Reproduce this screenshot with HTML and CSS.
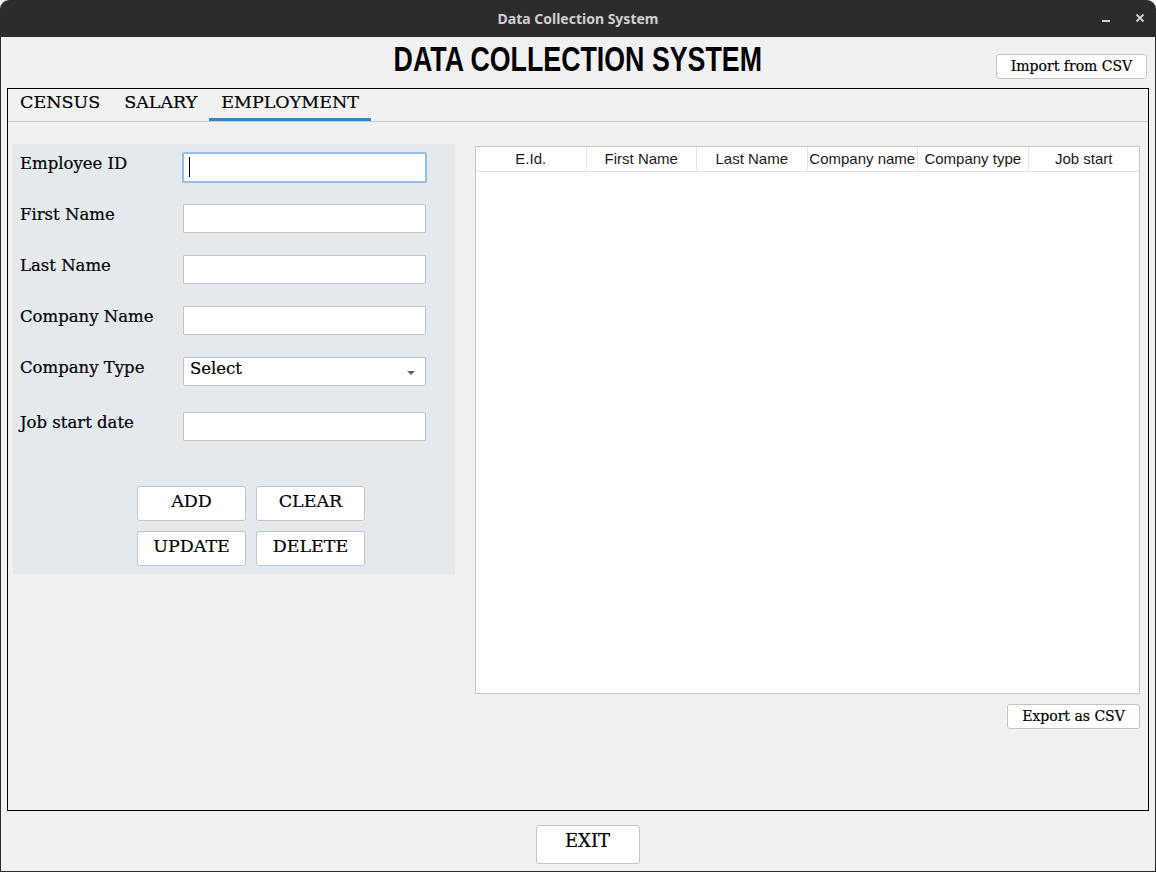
FILE: index.html
```html
<!DOCTYPE html>
<html>
<head>
<meta charset="utf-8">
<title>Data Collection System</title>
<link rel="stylesheet" href="styles.css">
</head>
<body>
<div class="window">
  <div class="titlebar">
    <span class="titlebar-text">Data Collection System</span>
    <div class="controls">
      <svg class="ctl" width="12" height="12" viewBox="0 0 12 12"><rect x="2" y="8" width="8" height="2" fill="#d0d0d0"/></svg>
      <svg class="ctl" width="12" height="12" viewBox="0 0 12 12"><path d="M2.5 2.5 L9.5 9.5 M9.5 2.5 L2.5 9.5" stroke="#d0d0d0" stroke-width="1.8"/></svg>
    </div>
  </div>
  <div class="app">
    <div class="header">
      <div></div>
      <h1 class="app-title"><span class="app-title-text">DATA COLLECTION SYSTEM</span></h1>
      <div class="header-right"><button class="btn btn-small btn-import">Import from CSV</button></div>
    </div>
    <div class="tabpanel">
      <div class="tabbar">
        <div class="tab">CENSUS</div>
        <div class="tab">SALARY</div>
        <div class="tab active">EMPLOYMENT</div>
      </div>
      <div class="tab-content">
        <div class="form">
          <div class="row">
            <span class="label">Employee ID</span>
            <div class="field focused"><span class="caret"></span></div>
          </div>
          <div class="row">
            <span class="label">First Name</span>
            <div class="field"></div>
          </div>
          <div class="row">
            <span class="label">Last Name</span>
            <div class="field"></div>
          </div>
          <div class="row">
            <span class="label">Company Name</span>
            <div class="field"></div>
          </div>
          <div class="row row-select">
            <span class="label">Company Type</span>
            <div class="field select"><span class="select-text">Select</span><span class="arrow"></span></div>
          </div>
          <div class="row row-last">
            <span class="label">Job start date</span>
            <div class="field"></div>
          </div>
          <div class="buttons">
            <button class="btn btn-form">ADD</button>
            <button class="btn btn-form">CLEAR</button>
            <button class="btn btn-form">UPDATE</button>
            <button class="btn btn-form">DELETE</button>
          </div>
        </div>
        <div class="right">
          <div class="table">
            <div class="thead">
              <div class="th">E.Id.</div>
              <div class="th">First Name</div>
              <div class="th">Last Name</div>
              <div class="th">Company name</div>
              <div class="th">Company type</div>
              <div class="th">Job start</div>
            </div>
          </div>
          <div class="export-row"><button class="btn btn-small btn-export">Export as CSV</button></div>
        </div>
      </div>
    </div>
    <div class="footer">
      <button class="btn btn-exit">EXIT</button>
    </div>
  </div>
</div>
</body>
</html>
```

FILE: styles.css
```css
* { box-sizing: border-box; }
html, body { margin: 0; padding: 0; background: #ffffff; }
body { width: 1156px; height: 872px; overflow: hidden; }

.window { width: 1156px; height: 872px; display: flex; flex-direction: column; }

.titlebar {
  height: 37px;
  background: #2c2c2c;
  border-radius: 9px 9px 0 0;
  position: relative;
  display: flex;
  align-items: center;
  justify-content: center;
}
.titlebar-text {
  font-family: "Noto Sans", "DejaVu Sans", sans-serif;
  font-weight: bold;
  font-size: 14px;
  color: #cfcfcf;
}
.controls {
  position: absolute;
  right: 10px;
  top: 12px;
  display: flex;
  gap: 22px;
}
.ctl { display: block; }

.app {
  flex: 1;
  background: #f1f1f1;
  border-left: 1px solid #2c2c2c;
  border-right: 1px solid #2c2c2c;
  border-bottom: 1px solid #2c2c2c;
  display: flex;
  flex-direction: column;
}

.header {
  height: 51px;
  display: grid;
  grid-template-columns: 1fr 380px 1fr;
  align-items: start;
}
.app-title {
  margin: 0;
  padding-top: 3px;
  display: flex;
  justify-content: center;
  font-family: "Liberation Sans", Arial, sans-serif;
  font-weight: bold;
  font-size: 35px;
  line-height: 38px;
  color: #000;
  white-space: nowrap;
}
.app-title-text {
  display: inline-block;
  transform: scaleX(0.765);
  transform-origin: center;
}
.header-right {
  display: flex;
  justify-content: flex-end;
  padding-top: 17px;
  padding-right: 8px;
}

.btn {
  background: #ffffff;
  border: 1px solid #c4c4c4;
  border-radius: 3px;
  font-family: "DejaVu Serif", "Liberation Serif", serif;
  color: #000;
  padding: 0;
  cursor: default;
  -webkit-text-stroke: 0.2px #000;
}
.btn-small {
  height: 25px;
  font-size: 14px;
  line-height: 22px;
  padding-bottom: 2px;
}
.btn-import { width: 151px; }

.tabpanel {
  margin: 0 6px;
  height: 723px;
  border: 1px solid #000;
  display: flex;
  flex-direction: column;
}
.tabbar {
  display: flex;
  height: 33px;
  border-bottom: 1px solid #c9c9c9;
}
.tab {
  padding: 0 12px;
  font-family: "DejaVu Serif", "Liberation Serif", serif;
  font-size: 17.5px;
  line-height: 26px;
  height: 32px;
  color: #000;
  -webkit-text-stroke: 0.2px #000;
}
.tab.active { border-bottom: 3px solid #3f80c4; }

.tab-content {
  display: flex;
  flex: 1;
  padding: 22px 8px 0 5px;
}

.form {
  width: 442px;
  height: 430px;
  background: #e4e9ed;
  padding: 9px 0 0 7px;
}
.row {
  display: flex;
  align-items: flex-start;
  height: 51px;
}
.row-select { height: 55px; }
.row-last { height: 74px; }
.label {
  width: 163px;
  font-family: "DejaVu Serif", "Liberation Serif", serif;
  font-size: 16.5px;
  line-height: 22px;
  color: #000;
  -webkit-text-stroke: 0.2px #000;
}
.field {
  width: 243px;
  height: 29px;
  background: #fff;
  border: 1px solid #c3c3c3;
  border-radius: 1px;
  position: relative;
}
.field.focused {
  border: 2px solid #95bde6;
  width: 245px;
  height: 31px;
  margin-left: -1px;
  margin-top: -1px;
  border-radius: 2px;
}
.caret {
  position: absolute;
  left: 5px;
  top: 3px;
  width: 1px;
  height: 20px;
  background: #000;
}
.select {
  display: flex;
  align-items: center;
  justify-content: space-between;
  padding: 0 10px 0 6px;
  border-radius: 2px;
}
.select-text {
  font-family: "DejaVu Serif", "Liberation Serif", serif;
  font-size: 16.5px;
  line-height: 22px;
  margin-top: -5px;
  -webkit-text-stroke: 0.2px #000;
}
.arrow {
  width: 0;
  height: 0;
  border-left: 4px solid transparent;
  border-right: 4px solid transparent;
  border-top: 4px solid #606060;
  margin-top: 3px;
}

.buttons {
  padding-left: 117px;
  display: grid;
  grid-template-columns: 109px 109px;
  column-gap: 10px;
  row-gap: 10px;
}
.btn-form {
  height: 35px;
  font-size: 17.5px;
  line-height: 26px;
  padding-bottom: 6px;
}

.right {
  flex: 1;
  margin-left: 20px;
  display: flex;
  flex-direction: column;
  padding-top: 2px;
}
.table {
  height: 548px;
  background: #fff;
  border: 1px solid #c8c8c8;
}
.thead {
  display: grid;
  grid-template-columns: repeat(6, 1fr);
  height: 25px;
  border-bottom: 1px solid #e3e3e3;
}
.th {
  font-family: "Liberation Sans", Arial, sans-serif;
  font-size: 15px;
  line-height: 24px;
  color: #1a1a1a;
  text-align: center;
  border-right: 1px solid #e6e6e6;
  white-space: nowrap;
  overflow: hidden;
}
.th:last-child { border-right: none; }

.export-row {
  display: flex;
  justify-content: flex-end;
  padding-top: 10px;
}
.btn-export { width: 133px; }

.footer {
  flex: 1;
  display: flex;
  justify-content: center;
  padding-top: 14px;
  padding-left: 19px;
}
.btn-exit {
  width: 104px;
  height: 39px;
  font-size: 18px;
  line-height: 26px;
  padding-bottom: 8px;
}
```
